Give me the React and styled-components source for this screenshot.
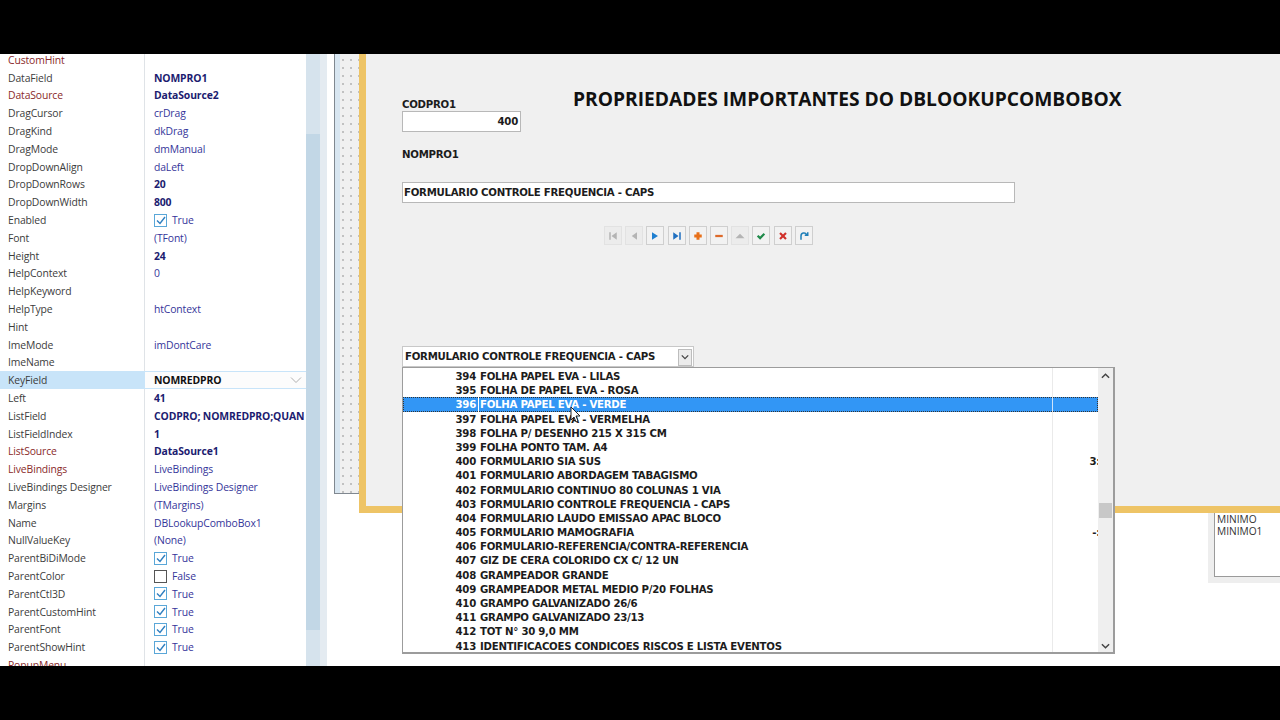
import styled, { createGlobalStyle } from "styled-components";

const GlobalStyle = createGlobalStyle`
  html, body {
    margin: 0;
    padding: 0;
    background: #000;
  }
`;

const props = [
  { name: "CustomHint", link: true },
  { name: "DataField", value: "NOMPRO1", bold: true },
  { name: "DataSource", link: true, value: "DataSource2", bold: true },
  { name: "DragCursor", value: "crDrag" },
  { name: "DragKind", value: "dkDrag" },
  { name: "DragMode", value: "dmManual" },
  { name: "DropDownAlign", value: "daLeft" },
  { name: "DropDownRows", value: "20", bold: true },
  { name: "DropDownWidth", value: "800", bold: true },
  { name: "Enabled", check: true },
  { name: "Font", value: "(TFont)" },
  { name: "Height", value: "24", bold: true },
  { name: "HelpContext", value: "0" },
  { name: "HelpKeyword" },
  { name: "HelpType", value: "htContext" },
  { name: "Hint" },
  { name: "ImeMode", value: "imDontCare" },
  { name: "ImeName" },
  { name: "KeyField", value: "NOMREDPRO", bold: true, active: true },
  { name: "Left", value: "41", bold: true },
  { name: "ListField", value: "CODPRO; NOMREDPRO;QUAN", bold: true },
  { name: "ListFieldIndex", value: "1", bold: true },
  { name: "ListSource", link: true, value: "DataSource1", bold: true },
  { name: "LiveBindings", link: true, value: "LiveBindings" },
  { name: "LiveBindings Designer", value: "LiveBindings Designer" },
  { name: "Margins", value: "(TMargins)" },
  { name: "Name", value: "DBLookupComboBox1" },
  { name: "NullValueKey", value: "(None)" },
  { name: "ParentBiDiMode", check: true },
  { name: "ParentColor", check: false },
  { name: "ParentCtl3D", check: true },
  { name: "ParentCustomHint", check: true },
  { name: "ParentFont", check: true },
  { name: "ParentShowHint", check: true },
  { name: "PopupMenu", link: true },
];

const items = [
  [394, "FOLHA PAPEL EVA - LILAS"],
  [395, "FOLHA DE PAPEL EVA - ROSA"],
  [396, "FOLHA PAPEL EVA - VERDE"],
  [397, "FOLHA PAPEL EVA - VERMELHA"],
  [398, "FOLHA P/ DESENHO 215 X 315 CM"],
  [399, "FOLHA PONTO TAM. A4"],
  [400, "FORMULARIO SIA SUS", "3:"],
  [401, "FORMULARIO ABORDAGEM TABAGISMO"],
  [402, "FORMULARIO CONTINUO 80 COLUNAS 1 VIA"],
  [403, "FORMULARIO CONTROLE FREQUENCIA - CAPS"],
  [404, "FORMULARIO LAUDO EMISSAO APAC BLOCO"],
  [405, "FORMULARIO MAMOGRAFIA", "-:"],
  [406, "FORMULARIO-REFERENCIA/CONTRA-REFERENCIA"],
  [407, "GIZ DE CERA COLORIDO CX C/ 12 UN"],
  [408, "GRAMPEADOR GRANDE"],
  [409, "GRAMPEADOR METAL MEDIO P/20 FOLHAS"],
  [410, "GRAMPO GALVANIZADO 26/6"],
  [411, "GRAMPO GALVANIZADO 23/13"],
  [412, "TOT N° 30 9,0 MM"],
  [413, "IDENTIFICACOES CONDICOES RISCOS E LISTA EVENTOS"],
];

const navIcons = [
  { color: "#b4b4b4", off: true, d: "M3 3h2v10H3zM13 3v10L6 8z" },
  { color: "#b4b4b4", off: true, d: "M12 3v10L5 8z" },
  { color: "#1f7fd0", d: "M4 3v10l8-5z" },
  { color: "#1f6fc0", d: "M3 3v10l7-5zM11 3h2v10h-2z" },
  { color: "#e8701a", d: "M6 3h4v3h3v4h-3v3H6v-3H3V6h3z" },
  { color: "#dd6a2a", d: "M3 6.5h10v3H3z" },
  { color: "#b4b4b4", off: true, d: "M8 5l6 6H2z" },
  { color: "#1f8a4a", d: "M2.5 8.5l2-2 2.3 2.3L11.5 4l2 2-6.7 7z" },
  { color: "#d0302a", d: "M3 5l2-2 3 3 3-3 2 2-3 3 3 3-2 2-3-3-3 3-2-2 3-3z" },
  { color: "#1f7fb8", stroke: true, d: "M4 13V8a4 4 0 0 1 7.5-2M9 7h4V3" },
];

const Page = styled.div`
  width: 1280px;
  height: 720px;
  display: flex;
  flex-direction: column;
  overflow: hidden;
  background: #000;
`;

const Band = styled.div`
  height: 54px;
  flex: none;
  background: #000;
`;

const Main = styled.div`
  flex: 1;
  min-height: 0;
  display: flex;
  background: #fff;
`;

const Inspector = styled.aside`
  width: 327px;
  flex: none;
  display: flex;
  overflow: hidden;
  background: #fff;
`;

const PropList = styled.div`
  width: 306px;
  flex: none;
  margin-top: -3px;
  font-family: "Open Sans", "Noto Sans", sans-serif;
  font-size: 10.4px;
  letter-spacing: -0.13px;
`;

const PropRow = styled.div`
  height: 17.8px;
  display: flex;
  align-items: center;
  background: ${(p) => (p.$active ? "#c8e4f9" : "transparent")};
`;

const PropName = styled.div`
  width: 145px;
  height: 100%;
  flex: none;
  box-sizing: border-box;
  padding-left: 8px;
  display: flex;
  align-items: center;
  border-right: 1px solid ${(p) => (p.$active ? "transparent" : "#dfe3e7")};
  white-space: nowrap;
  color: ${(p) => (p.$link ? "#8a2a2a" : "#3c3c3c")};
`;

const PropValue = styled.div`
  flex: 1;
  min-width: 0;
  height: ${(p) => (p.$active ? "16px" : "100%")};
  box-sizing: border-box;
  padding-left: 9px;
  display: flex;
  align-items: center;
  gap: 5px;
  position: relative;
  white-space: nowrap;
  color: ${(p) => (p.$active ? "#111" : p.$bold ? "#1c1c70" : "#35359a")};
  font-weight: ${(p) => (p.$bold ? 700 : 400)};
  background: ${(p) => (p.$active ? "#fcfcfc" : "transparent")};
`;

const Chevron = styled.svg`
  position: absolute;
  right: 4px;
  top: 4px;
  width: 12px;
  height: 8px;
`;

const CheckBox = styled.span`
  width: 11px;
  height: 11px;
  flex: none;
  display: flex;
  align-items: center;
  justify-content: center;
  background: #fff;
  border: 1px solid ${(p) => (p.$on ? "#5aa7d8" : "#555")};
`;

const ScrollTrack = styled.div`
  width: 14px;
  flex: none;
  display: flex;
  flex-direction: column;
  background: #d6e3ed;
`;

const ScrollSpacer = styled.div`
  flex: none;
  height: ${(p) => p.$h}px;
`;

const ScrollThumb = styled.div`
  flex: 1;
  background: #c2d7e6;
`;

const ScrollEdge = styled.div`
  flex: 1;
  background: #e4ebf1;
`;

const Designer = styled.main`
  flex: 1;
  min-width: 0;
  position: relative;
  overflow: hidden;
  background: #fff;
`;

const GridStrip = styled.div`
  position: absolute;
  left: 7px;
  top: 0;
  width: 32px;
  height: 440px;
  box-sizing: border-box;
  border-left: 1px solid #808890;
  border-bottom: 1px solid #808890;
  background-color: #f0f0f0;
  background-image: radial-gradient(#8a8a8a 0.6px, transparent 0.8px);
  background-size: 8px 8px;
  background-position: 4px 2px;
  &::before {
    content: "";
    position: absolute;
    inset: 0 auto 0 0;
    width: 5px;
    background: #d8e6f1;
  }
`;

const FormFrame = styled.div`
  position: absolute;
  left: 32px;
  top: 0;
  right: -10px;
  height: 459px;
  box-sizing: border-box;
  border: 7px solid #eec466;
  border-top: none;
  background: #f0f0f0;
`;

const Title = styled.h1`
  position: absolute;
  left: 246px;
  top: 33px;
  margin: 0;
  font-family: "Open Sans", sans-serif;
  font-size: 19.2px;
  font-weight: 700;
  line-height: 24px;
  white-space: nowrap;
  color: #111;
`;

const boldText = `
  font: 700 10.2px/14px "DejaVu Sans", sans-serif;
  letter-spacing: -0.27px;
  color: #1c1c1c;
  white-space: nowrap;
`;

const FieldLabel = styled.label`
  position: absolute;
  left: 75px;
  top: ${(p) => p.$top}px;
  ${boldText}
`;

const Edit = styled.div`
  position: absolute;
  left: 75px;
  top: ${(p) => p.$top}px;
  width: ${(p) => p.$w}px;
  height: 21px;
  box-sizing: border-box;
  padding: 0 2px 0 1px;
  display: flex;
  align-items: center;
  justify-content: ${(p) => (p.$right ? "flex-end" : "flex-start")};
  background: #fff;
  border: 1px solid #b8b8b8;
  ${boldText}
`;

const Navigator = styled.div`
  position: absolute;
  left: 277px;
  top: 172px;
  display: flex;
  gap: 3.2px;
`;

const NavButton = styled.div`
  width: 18px;
  height: 19px;
  box-sizing: border-box;
  display: flex;
  align-items: center;
  justify-content: center;
  border: 1px solid ${(p) => (p.$off ? "#e2e2e2" : "#cfcfcf")};
  background: ${(p) => (p.$off ? "#ececec" : "#f2f2f2")};
  svg {
    width: 12px;
    height: 12px;
  }
`;

const Combo = styled.div`
  position: absolute;
  left: 75px;
  top: 292px;
  width: 292px;
  height: 21px;
  box-sizing: border-box;
  padding: 1px 1px 0 2px;
  display: flex;
  align-items: center;
  justify-content: space-between;
  background: #fff;
  border: 1px solid #c8c8c8;
  ${boldText}
`;

const ComboButton = styled.span`
  width: 12px;
  height: 15px;
  display: flex;
  align-items: center;
  justify-content: center;
  background: #ececec;
  border: 1px solid #bdbdbd;
  svg {
    width: 8px;
    height: 6px;
  }
`;

const DropList = styled.div`
  position: absolute;
  left: 75px;
  top: 313px;
  width: 713px;
  height: 287px;
  box-sizing: border-box;
  display: flex;
  background: #fff;
  border: 1px solid #9c9c9c;
  border-width: 1px 2px 2px 1px;
  z-index: 2;
`;

const DropRows = styled.div`
  flex: 1;
  min-width: 0;
  padding-top: 1px;
  overflow: hidden;
  background: linear-gradient(#eaeaea, #eaeaea) 649px 0 / 1px 100% no-repeat;
  ${boldText}
  line-height: 16px;
`;

const DropRow = styled.div`
  height: 14.2px;
  display: flex;
  position: relative;
  white-space: nowrap;
  box-sizing: border-box;
  color: ${(p) => (p.$selected ? "#fff" : "inherit")};
  background: ${(p) => (p.$selected ? "#3296f5" : "transparent")};
  outline: ${(p) => (p.$selected ? "1px dotted #333" : "none")};
  outline-offset: -1px;
`;

const RowCode = styled.span`
  width: 76px;
  height: 14.2px;
  flex: none;
  box-sizing: border-box;
  text-align: right;
  border-right: 1px solid ${(p) => (p.$selected ? "#fff" : "transparent")};
  padding-right: 2px;
`;

const RowName = styled.span`
  padding-left: 1px;
`;

const RowQty = styled.span`
  position: absolute;
  right: -2px;
  top: 0;
`;

const RowDivider = styled.span`
  position: absolute;
  left: 649px;
  top: 0;
  bottom: 0;
  width: 1px;
  background: #cfe4fa;
`;

const DropScroll = styled.div`
  width: 15px;
  flex: none;
  display: flex;
  flex-direction: column;
  align-items: center;
  justify-content: space-between;
  position: relative;
  padding: 5px 0 3px;
  box-sizing: border-box;
  background: #efefef;
  svg {
    width: 9px;
    height: 6px;
  }
`;

const DropThumb = styled.div`
  position: absolute;
  left: 1px;
  right: 1px;
  top: 135px;
  height: 15px;
  background: #c8c8c8;
`;

const SidePanel = styled.div`
  position: absolute;
  left: 881px;
  top: 459px;
  right: 0;
  height: 70px;
  box-sizing: border-box;
  padding: 0 0 6px 6px;
  background: #eeeeee;
`;

const SideBox = styled.div`
  height: 100%;
  box-sizing: border-box;
  padding: 0 2px;
  background: #fff;
  border-left: 1px solid #9a9a9a;
  border-bottom: 1px solid #9a9a9a;
  font: 400 10.2px/12px "Open Sans", sans-serif;
  color: #333;
`;

const Pointer = styled.svg`
  position: absolute;
  left: 243px;
  top: 352px;
  width: 12px;
  height: 18px;
  z-index: 3;
`;

const Tick = () => (
  <svg width="10" height="9" viewBox="0 0 10 9">
    <path d="M1 4.5l3 3 5-6.5" fill="none" stroke="#2f7fc0" strokeWidth="1.4" />
  </svg>
);

const Caret = ({ up }) => (
  <svg viewBox="0 0 10 6">
    <path d={up ? "M1 5l4-4 4 4" : "M1 1l4 4 4-4"} fill="none" stroke="#444" strokeWidth="1.6" />
  </svg>
);

const App = () => (
  <Page>
    <GlobalStyle />
    <Band />
    <Main>
      <Inspector>
        <PropList>
          {props.map((p) => (
            <PropRow key={p.name} $active={p.active}>
              <PropName $link={p.link} $active={p.active}>{p.name}</PropName>
              <PropValue $bold={p.bold} $active={p.active}>
                {p.check !== undefined && (
                  <>
                    <CheckBox $on={p.check}>{p.check && <Tick />}</CheckBox>
                    {p.check ? "True" : "False"}
                  </>
                )}
                {p.value}
                {p.active && (
                  <Chevron viewBox="0 0 12 8">
                    <path d="M1 1.5l5 5 5-5" fill="none" stroke="#b0b0b0" strokeWidth="1" />
                  </Chevron>
                )}
              </PropValue>
            </PropRow>
          ))}
        </PropList>
        <ScrollTrack>
          <ScrollSpacer $h={80} />
          <ScrollThumb />
          <ScrollSpacer $h={36} />
        </ScrollTrack>
        <ScrollEdge />
      </Inspector>
      <Designer>
        <GridStrip />
        <FormFrame />
        <Title>PROPRIEDADES IMPORTANTES DO DBLOOKUPCOMBOBOX</Title>
        <FieldLabel $top={44}>CODPRO1</FieldLabel>
        <Edit $top={57} $w={119} $right>400</Edit>
        <FieldLabel $top={94}>NOMPRO1</FieldLabel>
        <Edit $top={128} $w={613}>FORMULARIO CONTROLE FREQUENCIA - CAPS</Edit>
        <Navigator>
          {navIcons.map((n, i) => (
            <NavButton key={i} $off={n.off}>
              <svg viewBox="0 0 16 16">
                {n.stroke ? (
                  <path d={n.d} fill="none" stroke={n.color} strokeWidth="2" />
                ) : (
                  <path d={n.d} fill={n.color} />
                )}
              </svg>
            </NavButton>
          ))}
        </Navigator>
        <Combo>
          FORMULARIO CONTROLE FREQUENCIA - CAPS
          <ComboButton><Caret /></ComboButton>
        </Combo>
        <DropList>
          <DropRows>
            {items.map(([code, name, qty]) => {
              const selected = code === 396;
              return (
                <DropRow key={code} $selected={selected}>
                  <RowCode $selected={selected}>{code}</RowCode>
                  <RowName>{name}</RowName>
                  {selected && <RowDivider />}
                  {qty && <RowQty>{qty}</RowQty>}
                </DropRow>
              );
            })}
          </DropRows>
          <DropScroll>
            <Caret up />
            <DropThumb />
            <Caret />
          </DropScroll>
        </DropList>
        <SidePanel>
          <SideBox>MINIMO<br />MINIMO1</SideBox>
        </SidePanel>
        <Pointer viewBox="0 0 12 18">
          <path d="M1 1v13l3-3 2 5 2-1-2-5h4z" fill="#fff" stroke="#222" strokeWidth="1" />
        </Pointer>
      </Designer>
    </Main>
    <Band />
  </Page>
);

export default App;
